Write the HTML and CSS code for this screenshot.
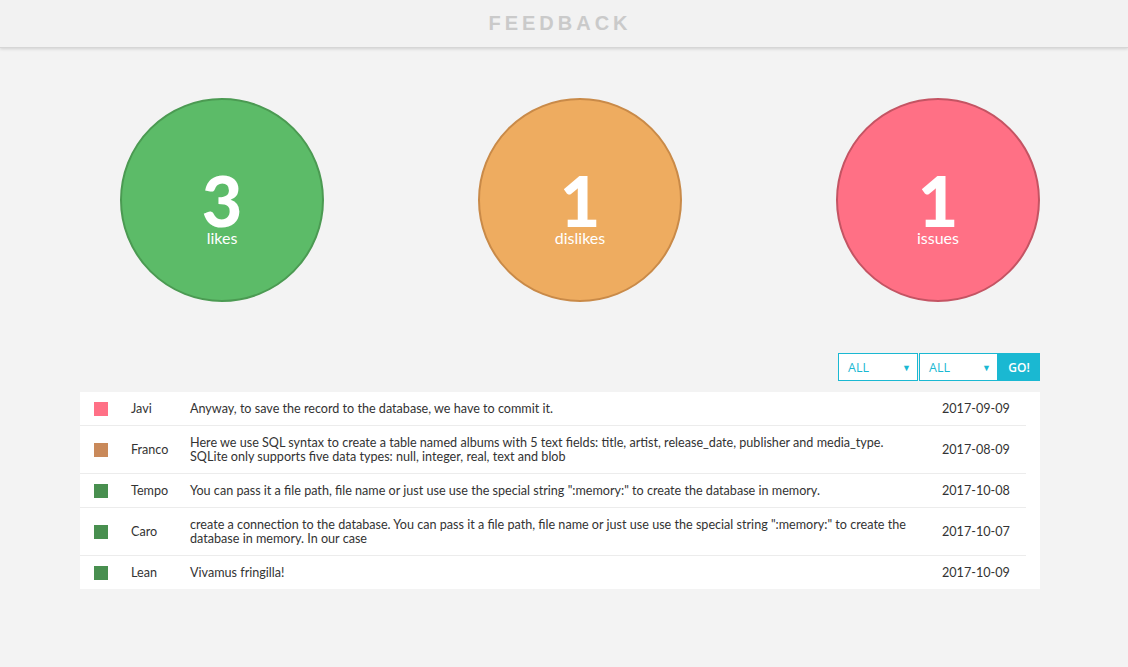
FILE: index.html
```html
<!DOCTYPE html>
<html>
<head>
<meta charset="utf-8">
<link rel="stylesheet" href="styles.css">
</head>
<body>
<header class="topbar"><h1 class="title">FEEDBACK</h1></header>
<main class="page">
  <section class="stats">
    <div class="stat-col"><div class="circle circle-likes"><div class="num">3</div><div class="label">likes</div></div></div>
    <div class="stat-col"><div class="circle circle-dislikes"><div class="num">1</div><div class="label">dislikes</div></div></div>
    <div class="stat-col"><div class="circle circle-issues"><div class="num">1</div><div class="label">issues</div></div></div>
  </section>
  <section class="list-wrap">
    <div class="filters">
      <div class="select"><span>ALL</span><span class="caret">&#9660;</span></div>
      <div class="select"><span>ALL</span><span class="caret">&#9660;</span></div>
      <button class="go">GO!</button>
    </div>
    <div class="table-box">
      <table class="feed">
        <tr><td class="c-sq"><span class="sq sq-issue"></span></td><td class="c-name">Javi</td><td class="c-msg">Anyway, to save the record to the database, we have to commit it.</td><td class="c-date">2017-09-09</td></tr>
        <tr><td class="c-sq"><span class="sq sq-dislike"></span></td><td class="c-name">Franco</td><td class="c-msg">Here we use SQL syntax to create a table named albums with 5 text fields: title, artist, release_date, publisher and media_type. SQLite only supports five data types: null, integer, real, text and blob</td><td class="c-date">2017-08-09</td></tr>
        <tr><td class="c-sq"><span class="sq sq-like"></span></td><td class="c-name">Tempo</td><td class="c-msg">You can pass it a file path, file name or just use use the special string ":memory:" to create the database in memory.</td><td class="c-date">2017-10-08</td></tr>
        <tr><td class="c-sq"><span class="sq sq-like"></span></td><td class="c-name">Caro</td><td class="c-msg">create a connection to the database. You can pass it a file path, file name or just use use the special string ":memory:" to create the database in memory. In our case</td><td class="c-date">2017-10-07</td></tr>
        <tr><td class="c-sq"><span class="sq sq-like"></span></td><td class="c-name">Lean</td><td class="c-msg">Vivamus fringilla!</td><td class="c-date">2017-10-09</td></tr>
      </table>
    </div>
  </section>
</main>
</body>
</html>
```
FILE: styles.css
```css
html, body { margin: 0; padding: 0; }
body {
  background: #f3f3f3;
  font-family: Lato, "Open Sans", sans-serif;
  color: #333;
  width: 1128px;
  height: 667px;
  overflow: hidden;
}
.topbar {
  height: 47px;
  background: #f2f2f2;
  border-bottom: 1px solid #d6d6d6;
  box-shadow: 0 1px 3px rgba(0,0,0,0.15);
  display: flex;
  align-items: center;
  justify-content: center;
}
.title {
  margin: 0;
  font-family: "Liberation Sans", Arial, sans-serif;
  font-weight: bold;
  font-size: 20px;
  letter-spacing: 4px;
  color: #cacaca;
  padding-right: 8px;
}
.page { padding-top: 50px; }
.stats {
  display: grid;
  grid-template-columns: repeat(3, 358px);
  margin-left: 43px;
}
.stat-col { display: flex; justify-content: center; }
.circle {
  width: 200px;
  height: 200px;
  border-radius: 50%;
  border: 2px solid;
  display: flex;
  flex-direction: column;
  align-items: center;
  justify-content: flex-start;
  color: #fff;
}
.circle-likes { background: #5cbb68; border-color: #4b9a52; }
.circle-dislikes { background: #eeac60; border-color: #c98a48; }
.circle-issues { background: #ff7085; border-color: #c45463; }
.num {
  font-family: Lato, sans-serif;
  font-weight: 900;
  font-size: 70px;
  height: 52px;
  line-height: 52px;
  margin-top: 74px;
}
.label {
  font-size: 16px;
  line-height: 20px;
  margin-top: 2px;
}
.list-wrap { width: 960px; margin: 51px 0 0 80px; }
.filters {
  display: flex;
  justify-content: flex-end;
  height: 28px;
  margin-bottom: 11px;
}
.select {
  height: 26px;
  border: 1px solid #1ab8d2;
  background: #fff;
  color: #1ab8d2;
  font-family: "Open Sans", sans-serif;
  font-size: 12.5px;
  display: flex;
  align-items: center;
  justify-content: space-between;
  padding: 0 6px 0 9px;
  box-sizing: content-box;
  width: 63px;
}
.select + .select { margin-left: 1px; width: 62px; }
.caret { font-size: 9px; }
.go {
  width: 42px;
  height: 28px;
  border: 0;
  background: #1ab8d2;
  color: #fff;
  font-family: "Open Sans", sans-serif;
  font-weight: 600;
  font-size: 12px;
  padding: 0;
}
.table-box { background: #fff; padding: 0 14px 0 0; }
.feed { width: 100%; border-collapse: collapse; font-size: 12.6px; }
.feed td { border-top: 1px solid #ececec; padding: 10px 0 9px; vertical-align: middle; line-height: 14px; }
.feed tr:first-child td { border-top: 0; }
.c-sq { width: 37px; padding-left: 14px !important; }
.sq { display: block; width: 14px; height: 14px; }
.sq-issue { background: #ff7086; }
.sq-dislike { background: #c9895a; }
.sq-like { background: #488f4f; }
.c-name { width: 59px; }
.c-msg { padding-right: 20px !important; }
.c-date { width: 84px; }
```
